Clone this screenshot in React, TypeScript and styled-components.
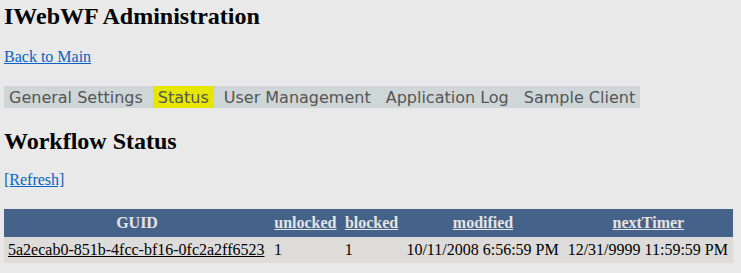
import styled, { createGlobalStyle } from 'styled-components';

const GlobalStyle = createGlobalStyle`
  html, body {
    margin: 0;
    padding: 0;
    background: #e9e9e9;
  }
  body {
    padding: 3px 4px;
    font-family: "Liberation Serif", "Times New Roman", serif;
    font-size: 16px;
    color: #000;
  }
`;

interface Row {
  guid: string;
  unlocked: number;
  blocked: number;
  modified: string;
  nextTimer: string;
}

const rows: Row[] = [
  {
    guid: '5a2ecab0-851b-4fcc-bf16-0fc2a2ff6523',
    unlocked: 1,
    blocked: 1,
    modified: '10/11/2008 6:56:59 PM',
    nextTimer: '12/31/9999 11:59:59 PM',
  },
];

const menu = ['General Settings', 'Status', 'User Management', 'Application Log', 'Sample Client'];

function App() {
  return (
    <Page>
      <GlobalStyle />
      <Title>IWebWF Administration</Title>
      <Link href="#">Back to Main</Link>
      <Menu>
        {menu.map((item) => (
          <MenuItem key={item} $active={item === 'Status'}>
            {item}
          </MenuItem>
        ))}
      </Menu>
      <SubTitle>Workflow Status</SubTitle>
      <Link href="#">[Refresh]</Link>
      <Grid>
        <thead>
          <tr>
            <Th>GUID</Th>
            <Th><HeadLink href="#">unlocked</HeadLink></Th>
            <Th><HeadLink href="#">blocked</HeadLink></Th>
            <Th><HeadLink href="#">modified</HeadLink></Th>
            <Th><HeadLink href="#">nextTimer</HeadLink></Th>
          </tr>
        </thead>
        <tbody>
          {rows.map((r) => (
            <tr key={r.guid}>
              <Td><GuidLink href="#">{r.guid}</GuidLink></Td>
              <Td>{r.unlocked}</Td>
              <Td>{r.blocked}</Td>
              <Td>{r.modified}</Td>
              <Td>{r.nextTimer}</Td>
            </tr>
          ))}
        </tbody>
      </Grid>
    </Page>
  );
}

const Page = styled.div`
  display: flex;
  flex-direction: column;
  align-items: flex-start;
`;

const Title = styled.h1`
  margin: 0 0 18px;
  font-size: 24px;
  line-height: 27px;
  font-weight: bold;
`;

const SubTitle = styled.h2`
  margin: 20px 0 16px;
  font-size: 24px;
  line-height: 27px;
  font-weight: bold;
`;

const Link = styled.a`
  color: #0563c8;
  text-decoration: underline;
  line-height: 18px;
`;

const Menu = styled.div`
  display: flex;
  gap: 5px;
  margin-top: 20px;
  background: #cfd6d8;
  height: 22px;
  align-items: stretch;
`;

const MenuItem = styled.span<{ $active?: boolean }>`
  display: flex;
  align-items: center;
  padding: 0 5px;
  font-family: "DejaVu Sans", Verdana, sans-serif;
  font-size: 16px;
  color: #555;
  background: ${(p) => (p.$active ? '#e6e600' : 'transparent')};
`;

const Grid = styled.table`
  margin-top: 20px;
  width: 729px;
  border-collapse: collapse;
  background: #dddcda;
`;

const Th = styled.th`
  background: #45628a;
  color: #e4e4e4;
  font-weight: bold;
  text-align: center;
  padding: 5px 4px 5px;
  white-space: nowrap;
`;

const HeadLink = styled.a`
  color: #e4e4e4;
  text-decoration: underline;
`;

const Td = styled.td`
  padding: 4px 4px 4px;
  text-align: left;
  white-space: nowrap;
`;

const GuidLink = styled.a`
  color: #000;
  text-decoration: underline;
`;

export default App;
